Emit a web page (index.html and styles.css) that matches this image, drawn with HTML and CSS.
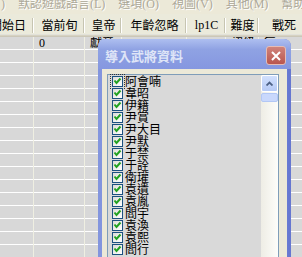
FILE: index.html
```html
<!DOCTYPE html>
<html lang="zh-Hant">
<head>
    <meta charset="UTF-8">
    <meta name="viewport" content="width=device-width, initial-scale=1.0">
    <title>導入武將資料</title>
    <link rel="stylesheet" href="styles.css">
</head>
<body>

    <svg class="defs" xmlns="http://www.w3.org/2000/svg">
        <symbol id="tick" viewBox="0 0 9 9">
            <path d="M1.5 3.5 L3.5 6 L7.5 1.5" fill="none" stroke="#21a121" stroke-width="2"/>
        </symbol>
    </svg>

    <div class="menubar">
        <span class="menu menu-cut">)</span>
        <span class="menu">默認遊戲語言(L)</span>
        <span class="menu">選項(O)</span>
        <span class="menu">視圖(V)</span>
        <span class="menu">其他(M)</span>
        <span class="menu">幫助(H)</span>
    </div>

    <div class="head">
        <span class="c1 first">開始日</span>
        <span class="c2">當前旬</span>
        <span class="c3">皇帝</span>
        <span class="c4">年齡忽略</span>
        <span class="c5">lp1C</span>
        <span class="c6">難度</span>
        <span class="c7">戰死</span>
    </div>

    <!-- one column per field, rows are drawn by the background lines -->
    <div class="rows">
        <div class="col c1"></div>
        <div class="col c2">0</div>
        <div class="col c3">獻帝</div>
        <div class="col c4"></div>
        <div class="col c5">0</div>
        <div class="col c6">初級</div>
        <div class="col c7">無</div>
    </div>

    <div class="dialog">
        <div class="dialog-title">
            <span>導入武將資料</span>
            <span class="close">
                <svg width="10" height="10" viewBox="0 0 10 10">
                    <path d="M1 1 L9 9 M9 1 L1 9" stroke="#fff" stroke-width="2"/>
                </svg>
            </span>
        </div>
        <div class="dialog-body">
            <div class="listbox">
                <ul class="items">
                    <li><span class="box focus"><svg><use href="#tick"/></svg></span>阿會喃</li>
                    <li><span class="box"><svg><use href="#tick"/></svg></span>韋昭</li>
                    <li><span class="box"><svg><use href="#tick"/></svg></span>伊籍</li>
                    <li><span class="box"><svg><use href="#tick"/></svg></span>尹賞</li>
                    <li><span class="box"><svg><use href="#tick"/></svg></span>尹大目</li>
                    <li><span class="box"><svg><use href="#tick"/></svg></span>尹默</li>
                    <li><span class="box"><svg><use href="#tick"/></svg></span>于禁</li>
                    <li><span class="box"><svg><use href="#tick"/></svg></span>于詮</li>
                    <li><span class="box"><svg><use href="#tick"/></svg></span>衛瓘</li>
                    <li><span class="box"><svg><use href="#tick"/></svg></span>袁遺</li>
                    <li><span class="box"><svg><use href="#tick"/></svg></span>袁胤</li>
                    <li><span class="box"><svg><use href="#tick"/></svg></span>閻宇</li>
                    <li><span class="box"><svg><use href="#tick"/></svg></span>袁渙</li>
                    <li><span class="box"><svg><use href="#tick"/></svg></span>袁熙</li>
                    <li><span class="box"><svg><use href="#tick"/></svg></span>閻行</li>
                </ul>
                <div class="vscroll">
                    <span class="sb-btn">
                        <svg width="7" height="5" viewBox="0 0 7 5">
                            <path d="M0.5 4.5 L3.5 1.5 L6.5 4.5" fill="none" stroke="#4d6185" stroke-width="1.8"/>
                        </svg>
                    </span>
                    <span class="sb-thumb"></span>
                </div>
            </div>
        </div>
    </div>

</body>
</html>
```

FILE: styles.css
```css
* {
    box-sizing: border-box;
}
body {
    margin: 0;
    width: 302px;
    height: 257px;
    overflow: hidden;
    position: relative;
    background: #d8d8d8;
    font-family: "Liberation Serif", "Noto Sans CJK TC", serif;
    font-size: 12px;
}
.defs {
    display: none;
}

.menubar {
    display: flex;
    gap: 13px;
    height: 14px;
    padding-left: 1px;
    background: #ece9d8;
    color: #aca899;
    text-shadow: 1px 1px 0 #fff;
    line-height: 8px;
    white-space: nowrap;
    overflow: hidden;
}
.menu-cut {
    width: 8px;
}

/* column widths shared by header and body */
.c1 { width: 34px; }
.c2 { width: 51px; }
.c3 { width: 37px; }
.c4 { width: 65px; }
.c5 { width: 39px; }
.c6 { width: 33px; }
.c7 { width: 50px; }

.head {
    display: flex;
    height: 23px;
    background: #ebeadb;
    box-shadow: inset 0 -1px #cbc7b8, inset 0 -2px #d6d2c2, inset 0 -3px #e2e2da;
}
.head span {
    flex: none;
    display: flex;
    align-items: center;
    justify-content: center;
    white-space: nowrap;
    overflow: hidden;
    padding-bottom: 1px;
    background:
        linear-gradient(#fff, #fff) right 0 top 4px / 1px 15px no-repeat,
        linear-gradient(#c7c5b2, #c7c5b2) right 1px top 4px / 1px 15px no-repeat;
}
.head .first {
    justify-content: flex-end;
    padding-right: 8px;
}

.rows {
    display: flex;
    height: 220px;
    background: repeating-linear-gradient(to bottom, transparent 0 12px, #fff 12px 13px);
}
.col {
    flex: none;
    border-right: 1px solid #efefe2;
    padding-left: 5px;
    line-height: 12px;
    white-space: nowrap;
    overflow: hidden;
}

/* the import dialog lying over the grid */
.dialog {
    position: absolute;
    left: 98px;
    top: 39px;
    width: 193px;
    height: 240px;
    display: flex;
    flex-direction: column;
    padding: 0 4px;
    background: linear-gradient(to right, #8395de, #7b8ddb 90%, #6576d0);
    border-radius: 7px 7px 0 0;
}
.dialog-title {
    height: 30px;
    margin: 0 -4px;
    padding: 3px 5px 0 7px;
    display: flex;
    align-items: center;
    justify-content: space-between;
    background: linear-gradient(#aebff0, #8fa2e3 35%, #8597e0);
    border-radius: 7px 7px 0 0;
    color: #dfe5f7;
    font-family: "Noto Sans CJK TC", sans-serif;
    font-size: 13px;
    font-weight: bold;
}
.close {
    width: 20px;
    height: 19px;
    display: flex;
    align-items: center;
    justify-content: center;
    border: 1px solid #e6bcb4;
    border-radius: 3px;
    background: linear-gradient(#d0837a, #b9564f);
}
.dialog-body {
    flex: 1;
    display: flex;
    padding: 5px 8px 0 5px;
    background: #ece9d8;
}
.listbox {
    flex: 1;
    display: flex;
    border: 1px solid #7f9db9;
    background: #d9d9d9;
}
.items {
    flex: 1;
    list-style: none;
    margin: 0;
    padding: 0 0 0 4px;
}
.items li {
    height: 12px;
    display: flex;
    align-items: center;
    gap: 2px;
    font-family: "Noto Sans CJK TC", sans-serif;
    font-size: 12px;
    line-height: 12px;
    white-space: nowrap;
}
.box {
    width: 11px;
    height: 11px;
    display: flex;
    align-items: center;
    justify-content: center;
    border: 1px solid #1c5180;
    background: linear-gradient(135deg, #dcdcd7, #fff);
}
.box svg {
    width: 9px;
    height: 9px;
}
.focus {
    outline: 1px dotted #333;
    outline-offset: 1px;
}

.vscroll {
    width: 17px;
    display: flex;
    flex-direction: column;
    background: linear-gradient(to right, #eeede5, #fdfdfa);
}
.sb-btn {
    height: 17px;
    display: flex;
    align-items: center;
    justify-content: center;
    border: 1px solid #fff;
    border-radius: 2px;
    background: linear-gradient(#d2e0fd, #b6caf5);
}
.sb-thumb {
    height: 9px;
    margin-top: 1px;
    border: 1px solid #b2c7f5;
    border-radius: 2px;
    background: #c9d8fc;
}
```
